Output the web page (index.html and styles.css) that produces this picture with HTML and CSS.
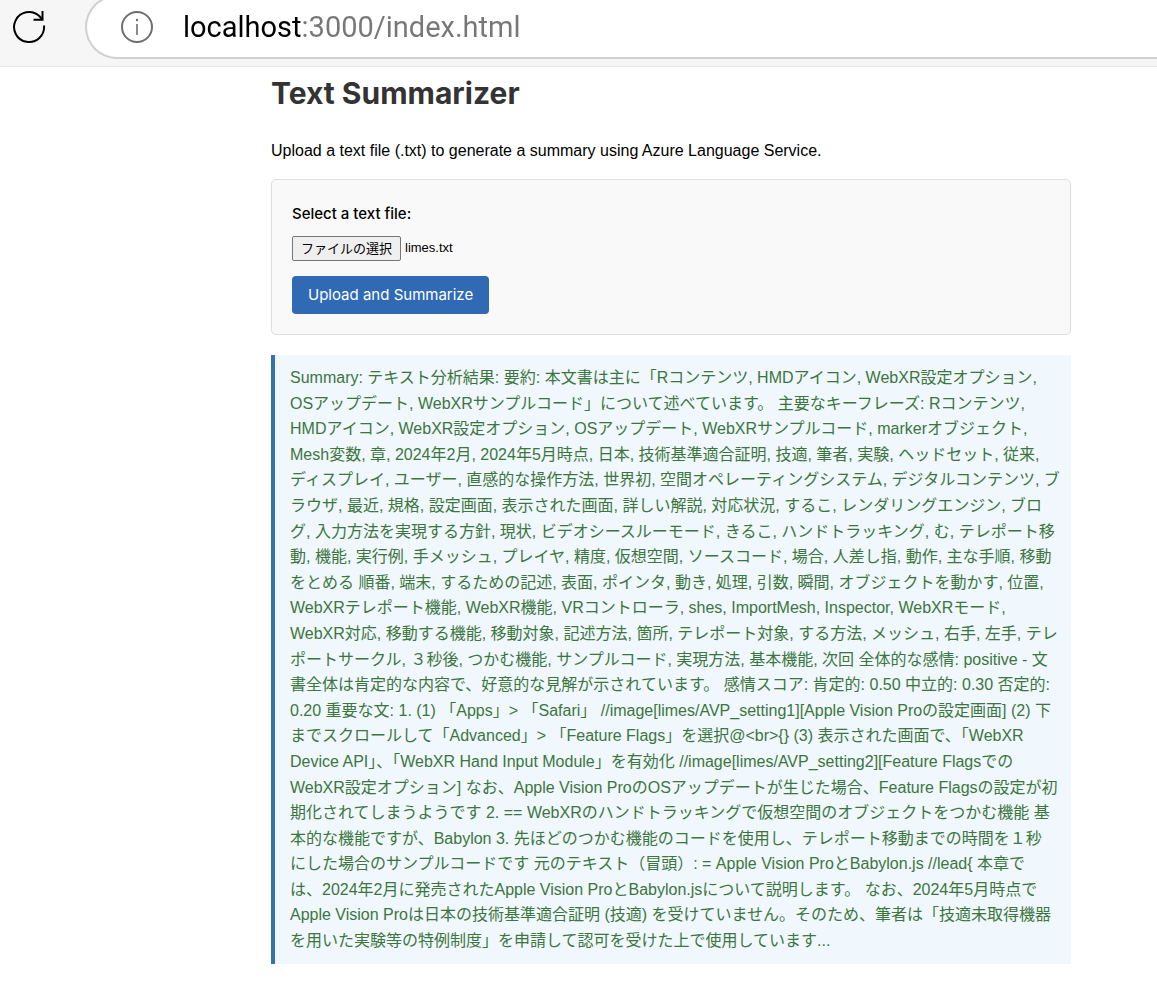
FILE: index.html
```html
<!DOCTYPE html>
<html lang="ja">
<head>
    <meta charset="UTF-8">
    <meta name="viewport" content="width=device-width, initial-scale=1.0">
    <title>Text Summarizer</title>
    <link rel="stylesheet" href="styles.css">
</head>
<body>
    <header class="toolbar">
        <button class="reload" type="button" aria-label="Reload">
            <svg width="34" height="34" viewBox="0 0 34 34" fill="none" stroke="#000" stroke-width="2">
                <path d="M32 15.5A15 15 0 1 1 27 5.8L30.5 9.5"/>
                <path d="M30.5 1v8.8h-9"/>
            </svg>
        </button>
        <div class="address-bar">
            <svg width="32" height="34" viewBox="0 0 32 34" fill="none" stroke="#6e6e6e" stroke-width="2">
                <ellipse cx="16" cy="17" rx="15" ry="15"/>
                <path d="M16 14v11" stroke-width="1.6"/>
                <circle cx="16" cy="10" r="1.2" fill="#6e6e6e" stroke="none"/>
            </svg>
            <input class="address" type="text" value="localhost:3000/index.html" aria-label="Address">
        </div>
    </header>

    <main class="container">
        <h1>Text Summarizer</h1>
        <p class="intro">Upload a text file (.txt) to generate a summary using Azure Language Service.</p>

        <form class="upload-form">
            <label class="file-label" for="textFile">Select a text file:</label>
            <div class="file-picker">
                <span class="file-button">ファイルの選択</span>
                <span class="file-name">limes.txt</span>
                <input type="file" id="textFile" accept=".txt">
            </div>
            <button class="submit" type="button">Upload and Summarize</button>
        </form>

        <div class="result">
            Summary: テキスト分析結果: 要約: 本文書は主に「Rコンテンツ, HMDアイコン, WebXR設定オプション,<br>
            OSアップデート, WebXRサンプルコード」について述べています。 主要なキーフレーズ: Rコンテンツ,<br>
            HMDアイコン, WebXR設定オプション, OSアップデート, WebXRサンプルコード, markerオブジェクト,<br>
            Mesh変数, 章, 2024年2月, 2024年5月時点, 日本, 技術基準適合証明, 技適, 筆者, 実験, ヘッドセット, 従来,<br>
            ディスプレイ, ユーザー, 直感的な操作方法, 世界初, 空間オペレーティングシステム, デジタルコンテンツ, ブ<br>
            ラウザ, 最近, 規格, 設定画面, 表示された画面, 詳しい解説, 対応状況, するこ, レンダリングエンジン, ブロ<br>
            グ, 入力方法を実現する方針, 現状, ビデオシースルーモード, きるこ, ハンドトラッキング, む, テレポート移<br>
            動, 機能, 実行例, 手メッシュ, プレイヤ, 精度, 仮想空間, ソースコード, 場合, 人差し指, 動作, 主な手順, 移動<br>
            をとめる 順番, 端末, するための記述, 表面, ポインタ, 動き, 処理, 引数, 瞬間, オブジェクトを動かす, 位置,<br>
            WebXRテレポート機能, WebXR機能, VRコントローラ, shes, ImportMesh, Inspector, WebXRモード,<br>
            WebXR対応, 移動する機能, 移動対象, 記述方法, 箇所, テレポート対象, する方法, メッシュ, 右手, 左手, テレ<br>
            ポートサークル, ３秒後, つかむ機能, サンプルコード, 実現方法, 基本機能, 次回 全体的な感情: positive - 文<br>
            書全体は肯定的な内容で、好意的な見解が示されています。 感情スコア: 肯定的: 0.50 中立的: 0.30 否定的:<br>
            0.20 重要な文: 1. (1) 「Apps」&gt; 「Safari」 //image[limes/AVP_setting1][Apple Vision Proの設定画面] (2) 下<br>
            までスクロールして「Advanced」&gt; 「Feature Flags」を選択@&lt;br&gt;{} (3) 表示された画面で、「WebXR<br>
            Device API」、「WebXR Hand Input Module」を有効化 //image[limes/AVP_setting2][Feature Flagsでの<br>
            WebXR設定オプション] なお、Apple Vision ProのOSアップデートが生じた場合、Feature Flagsの設定が初<br>
            期化されてしまうようです 2. == WebXRのハンドトラッキングで仮想空間のオブジェクトをつかむ機能 基<br>
            本的な機能ですが、Babylon 3. 先ほどのつかむ機能のコードを使用し、テレポート移動までの時間を１秒<br>
            にした場合のサンプルコードです 元のテキスト（冒頭）: = Apple Vision ProとBabylon.js //lead{ 本章で<br>
            は、2024年2月に発売されたApple Vision ProとBabylon.jsについて説明します。 なお、2024年5月時点で<br>
            Apple Vision Proは日本の技術基準適合証明 (技適) を受けていません。そのため、筆者は「技適未取得機器<br>
            を用いた実験等の特例制度」を申請して認可を受けた上で使用しています...
        </div>
    </main>
</body>
</html>
```
FILE: styles.css
```css
* {
    box-sizing: border-box;
}
body {
    margin: 0;
    font-family: "Liberation Sans", "Noto Sans CJK JP", sans-serif;
    font-size: 16px;
    line-height: 1.6;
    color: #000;
    background-color: #fff;
}
.toolbar {
    display: flex;
    align-items: flex-end;
    gap: 38px;
    height: 67px;
    padding: 0 0 7px 12px;
    overflow: hidden;
    background-color: #f6f6f6;
    border-bottom: 1px solid #e6e6e6;
}
.reload {
    display: flex;
    align-items: center;
    width: 35px;
    height: 64px;
    padding: 0;
    border: none;
    background: none;
    flex-shrink: 0;
}
.address-bar {
    display: flex;
    align-items: center;
    flex: 1;
    gap: 30px;
    height: 64px;
    padding-left: 34px;
    background-color: #fff;
    border: 2px solid #d0d0d0;
    border-right: none;
    border-radius: 32px 0 0 32px;
}
.address {
    flex: 1;
    padding: 0;
    border: none;
    outline: none;
    font-family: Roboto, sans-serif;
    font-size: 29px;
    /* host in black, port and path in grey */
    color: transparent;
    background: linear-gradient(to right, #000 119px, #777 119px);
    -webkit-background-clip: text;
    background-clip: text;
}
.container {
    margin: 0 86px 20px 271px;
}
h1 {
    margin: 0;
    font-family: Inter, sans-serif;
    font-size: 30px;
    line-height: 52px;
    color: #333;
}
.intro {
    margin: 19px 0 15px;
    line-height: 26px;
}
.upload-form {
    padding: 20px;
    margin-bottom: 20px;
    background-color: #f9f9f9;
    border: 1px solid #ddd;
    border-radius: 5px;
}
.file-label {
    display: block;
    margin-bottom: 8px;
    font-family: Inter, sans-serif;
    font-size: 15px;
    line-height: 28px;
    font-weight: 500;
}
.file-picker {
    position: relative;
    display: flex;
    align-items: center;
    gap: 4px;
    width: 240px;
    margin-bottom: 15px;
    font-size: 13px;
}
.file-button {
    padding: 0 8px;
    line-height: 23px;
    background-color: #efefef;
    border: 1px solid #767676;
    border-radius: 2px;
}
/* the real picker lies over the drawn one */
.file-picker input {
    position: absolute;
    inset: 0;
    width: 100%;
    opacity: 0;
}
.submit {
    display: block;
    padding: 10px 16px;
    border: none;
    border-radius: 4px;
    background-color: #306ab5;
    color: #fff;
    font-family: Inter, sans-serif;
    font-size: 15px;
    line-height: 18px;
    cursor: pointer;
}
.result {
    padding: 10px 0 10px 15px;
    background-color: #f0f7fd;
    border-left: 4px solid #3572ab;
    color: #3c763d;
}
```
